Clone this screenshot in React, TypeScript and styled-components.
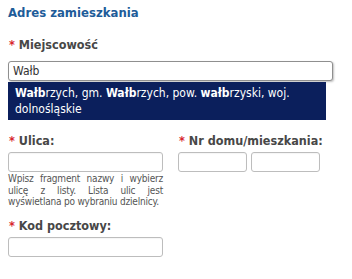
import React from "react";
import { createGlobalStyle, styled } from "styled-components";

const GlobalStyle = createGlobalStyle`
  html, body {
    margin: 0;
    padding: 0;
    background: #fff;
  }
  body {
    font-family: Tahoma, "DejaVu Sans Condensed", "DejaVu Sans", sans-serif;
  }
`;

const SUGGESTION = [
  { text: "Wałb", bold: true },
  { text: "rzych, gm. ", bold: false },
  { text: "Wałb", bold: true },
  { text: "rzych, pow. ", bold: false },
  { text: "wałb", bold: true },
  { text: "rzyski, woj. dolnośląskie", bold: false },
];

// the hint is justified line by line, as in the original form
const HINT_LINES = [
  "Wpisz fragment nazwy i wybierz",
  "ulicę z listy. Lista ulic jest",
  "wyświetlana po wybraniu dzielnicy.",
];

export default function App() {
  const suggestion = SUGGESTION.map((part, i) =>
    part.bold ? <b key={i}>{part.text}</b> : <span key={i}>{part.text}</span>
  );

  const hint = HINT_LINES.map((line, i) => (
    <HintLine key={i} $justify={i < HINT_LINES.length - 1}>
      {line}
    </HintLine>
  ));

  return (
    <Page>
      <GlobalStyle />
      <Title>Adres zamieszkania</Title>

      <Label $top={16}>
        <Star>*</Star> Miejscowość
      </Label>
      <Input $width={325} $focused defaultValue="Wałb" />
      <Suggestions>
        <SuggestionItem>{suggestion}</SuggestionItem>
      </Suggestions>

      <Row>
        <Column $width={155}>
          <Label $top={13}>
            <Star>*</Star> Ulica:
          </Label>
          <Input $width={155} />
          <Hint>{hint}</Hint>
        </Column>
        <Column $width={150}>
          <Label $top={13}>
            <Star>*</Star> Nr domu/mieszkania:
          </Label>
          <NumberInputs>
            <Input $width={69} />
            <Input $width={69} />
          </NumberInputs>
        </Column>
      </Row>

      <Label $top={10}>
        <Star>*</Star> Kod pocztowy:
      </Label>
      <Input $width={155} />
    </Page>
  );
}

const Page = styled.div`
  padding: 5px 8px 10px;
  width: 336px;
  box-sizing: border-box;
`;

const Title = styled.h2`
  margin: 0;
  font-size: 13px;
  line-height: 16px;
  font-weight: bold;
  color: #1e5c99;
`;

const Label = styled.div<{ $top: number }>`
  margin-top: ${(p) => p.$top}px;
  font-size: 12.5px;
  line-height: 16px;
  font-weight: bold;
  color: #474747;
  white-space: nowrap;
`;

const Star = styled.span`
  color: #d7262e;
  margin-left: 1px;
`;

const Input = styled.input<{ $width: number; $focused?: boolean }>`
  display: block;
  box-sizing: border-box;
  width: ${(p) => p.$width}px;
  height: 20px;
  margin: 0;
  margin-top: ${(p) => (p.$focused ? 8 : 3)}px;
  padding: 0 4px;
  border: 1px solid ${(p) => (p.$focused ? "#8f8f8f" : "#bdbdbd")};
  border-radius: 3px;
  box-shadow: ${(p) =>
    p.$focused ? "1px 1px 2px rgba(0,0,0,0.25)" : "inset 0 1px 1px rgba(0,0,0,0.04)"};
  font-family: inherit;
  font-size: 12px;
  color: #333;
  outline: none;
  background: #fff;
`;

const Suggestions = styled.ul`
  list-style: none;
  margin: 1px 0 0;
  padding: 0;
  width: 318px;
  background: #0b1f5c;
`;

const SuggestionItem = styled.li`
  padding: 3px 6px 3px 7px;
  font-size: 12px;
  line-height: 16px;
  color: #fff;
`;

const Row = styled.div`
  display: flex;
  gap: 15px;
`;

const Column = styled.div<{ $width: number }>`
  width: ${(p) => p.$width}px;
`;

const NumberInputs = styled.div`
  display: flex;
  gap: 4px;
`;

const Hint = styled.div`
  margin-top: 1px;
  font-size: 10px;
  letter-spacing: -0.2px;
  line-height: 11.5px;
  color: #555;
`;

const HintLine = styled.span<{ $justify: boolean }>`
  display: block;
  white-space: nowrap;
  text-align: ${(p) => (p.$justify ? "justify" : "left")};
  text-align-last: ${(p) => (p.$justify ? "justify" : "left")};
`;
